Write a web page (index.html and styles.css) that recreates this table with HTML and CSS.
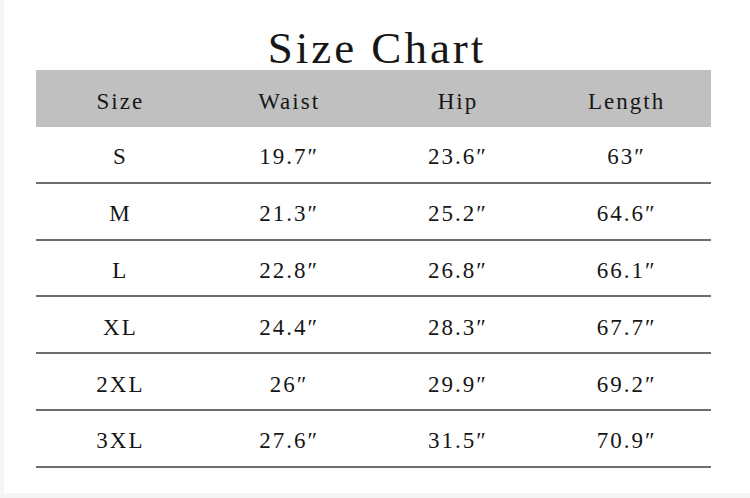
FILE: index.html
```html
<!DOCTYPE html>
<html>
<head>
<meta charset="utf-8">
<link rel="stylesheet" href="styles.css">
</head>
<body>
<div class="sheet">
  <h1 class="title">Size Chart</h1>
  <table class="chart">
    <thead>
      <tr><th>Size</th><th>Waist</th><th>Hip</th><th>Length</th></tr>
    </thead>
    <tbody>
      <tr><td>S</td><td>19.7″</td><td>23.6″</td><td>63″</td></tr>
      <tr><td>M</td><td>21.3″</td><td>25.2″</td><td>64.6″</td></tr>
      <tr><td>L</td><td>22.8″</td><td>26.8″</td><td>66.1″</td></tr>
      <tr><td>XL</td><td>24.4″</td><td>28.3″</td><td>67.7″</td></tr>
      <tr><td>2XL</td><td>26″</td><td>29.9″</td><td>69.2″</td></tr>
      <tr><td>3XL</td><td>27.6″</td><td>31.5″</td><td>70.9″</td></tr>
    </tbody>
  </table>
</div>
</body>
</html>
```
FILE: styles.css
```css
html, body {
  margin: 0;
  padding: 0;
  background: #f5f5f5;
}
.sheet {
  margin-left: 4px;
  width: 746px;
  height: 493px;
  background: #ffffff;
  overflow: hidden;
  font-family: "Liberation Serif", "DejaVu Serif", serif;
  color: #161616;
}
.title {
  margin: 0;
  padding-top: 26px;
  height: 44px;
  font-size: 45px;
  line-height: 44px;
  font-weight: normal;
  letter-spacing: 3px;
  text-align: center;
}
.chart {
  margin-left: 32px;
  width: 675px;
  border-collapse: collapse;
  table-layout: fixed;
}
.chart th,
.chart td {
  width: 25%;
  padding: 6px 0 0 0;
  text-align: center;
  font-size: 23px;
  font-weight: normal;
  letter-spacing: 2px;
  line-height: 28px;
}
.chart th {
  background: #c0c0c0;
  height: 51px;
}
.chart td {
  height: 48.8px;
  border-bottom: 2px solid #6e6e6e;
}
```
